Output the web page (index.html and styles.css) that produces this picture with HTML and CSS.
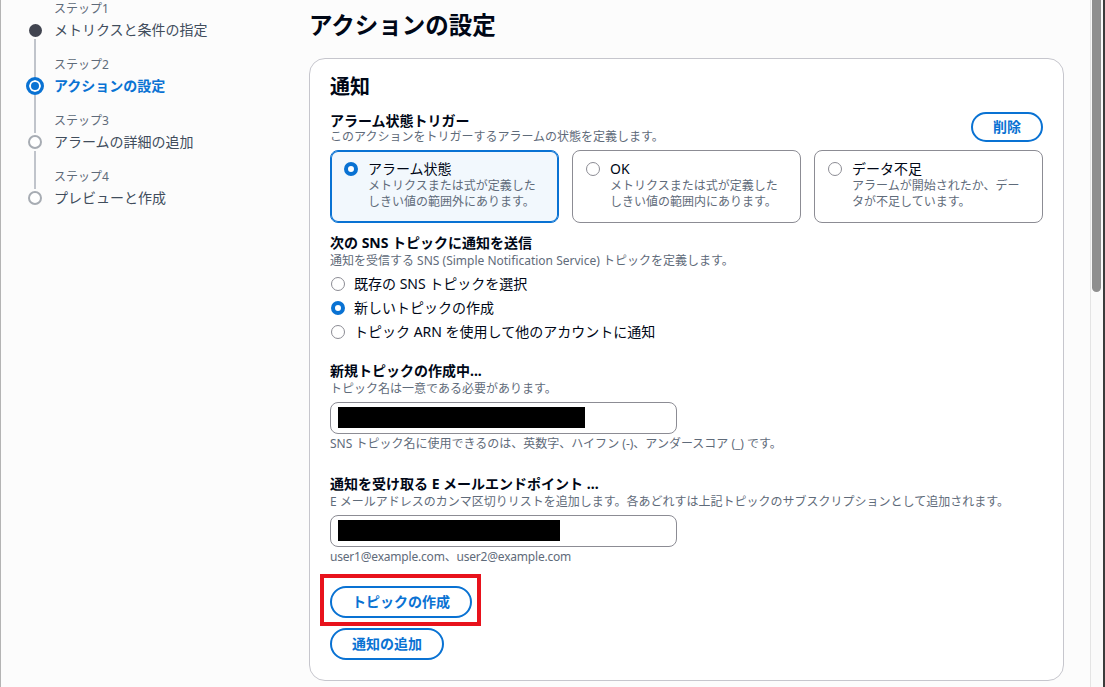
FILE: index.html
```html
<!DOCTYPE html>
<html lang="ja">
<head>
  <meta charset="UTF-8" />
  <meta name="viewport" content="width=device-width, initial-scale=1.0" />
  <title>アクションの設定</title>
  <link rel="stylesheet" href="styles.css">
</head>
<body>
  <div class="frame">
    <div class="page">
      <nav class="sidebar">
        <ol class="steps">
          <li class="step done">
            <div class="rail"><span class="seg top"></span><span class="dot-box"><span class="dot"></span></span><span class="seg bottom"></span></div>
            <div class="step-text">
              <div class="step-num">ステップ1</div>
              <div class="step-title">メトリクスと条件の指定</div>
            </div>
          </li>
          <li class="step active">
            <div class="rail"><span class="seg top"></span><span class="dot-box"><span class="dot"></span></span><span class="seg bottom"></span></div>
            <div class="step-text">
              <div class="step-num">ステップ2</div>
              <div class="step-title">アクションの設定</div>
            </div>
          </li>
          <li class="step">
            <div class="rail"><span class="seg top"></span><span class="dot-box"><span class="dot"></span></span><span class="seg bottom"></span></div>
            <div class="step-text">
              <div class="step-num">ステップ3</div>
              <div class="step-title">アラームの詳細の追加</div>
            </div>
          </li>
          <li class="step">
            <div class="rail"><span class="seg top"></span><span class="dot-box"><span class="dot"></span></span><span class="seg bottom"></span></div>
            <div class="step-text">
              <div class="step-num">ステップ4</div>
              <div class="step-title">プレビューと作成</div>
            </div>
          </li>
        </ol>
      </nav>

      <main class="content">
        <h1>アクションの設定</h1>

        <section class="card">
          <h2>通知</h2>

          <div class="trigger-head">
            <div>
              <div class="field-label">アラーム状態トリガー</div>
              <div class="field-desc tight">このアクションをトリガーするアラームの状態を定義します。</div>
            </div>
            <button class="btn btn-delete">削除</button>
          </div>

          <div class="tiles">
            <div class="tile selected">
              <span class="radio checked"></span>
              <div>
                <div class="tile-label">アラーム状態</div>
                <div class="tile-desc">メトリクスまたは式が定義した<br>しきい値の範囲外にあります。</div>
              </div>
            </div>
            <div class="tile">
              <span class="radio"></span>
              <div>
                <div class="tile-label">OK</div>
                <div class="tile-desc">メトリクスまたは式が定義した<br>しきい値の範囲内にあります。</div>
              </div>
            </div>
            <div class="tile">
              <span class="radio"></span>
              <div>
                <div class="tile-label">データ不足</div>
                <div class="tile-desc">アラームが開始されたか、デー<br>タが不足しています。</div>
              </div>
            </div>
          </div>

          <div class="field-label sns-label">次の SNS トピックに通知を送信</div>
          <div class="field-desc">通知を受信する SNS (Simple Notification Service) トピックを定義します。</div>
          <div class="radio-list">
            <div class="radio-item"><span class="radio"></span>既存の SNS トピックを選択</div>
            <div class="radio-item"><span class="radio checked"></span>新しいトピックの作成</div>
            <div class="radio-item"><span class="radio"></span>トピック ARN を使用して他のアカウントに通知</div>
          </div>

          <div class="field-label topic-label">新規トピックの作成中...</div>
          <div class="field-desc">トピック名は一意である必要があります。</div>
          <div class="text-input"><span class="redact redact-name"></span></div>
          <div class="field-hint">SNS トピック名に使用できるのは、英数字、ハイフン (-)、アンダースコア (_) です。</div>

          <div class="field-label email-label">通知を受け取る E メールエンドポイント ...</div>
          <div class="field-desc">E メールアドレスのカンマ区切りリストを追加します。各あどれすは上記トピックのサブスクリプションとして追加されます。</div>
          <div class="text-input"><span class="redact redact-email"></span></div>
          <div class="field-hint email-hint">user1@example.com、user2@example.com</div>

          <div class="actions">
            <span class="highlight"><button class="btn">トピックの作成</button></span>
            <button class="btn">通知の追加</button>
          </div>
        </section>
      </main>
    </div>

    <div class="scrollbar"><div class="thumb"></div></div>
  </div>
</body>
</html>
```

FILE: styles.css
```css
body {
  margin: 0;
  font-family: "Noto Sans", "Noto Sans CJK JP", sans-serif;
  color: #000716;
  background: #fff;
}
.frame {
  display: flex;
  height: 687px;
  overflow: hidden;
}
.page {
  flex: 1;
  display: flex;
  border-left: 1px solid #b4b4b4;
  background: #fcfcfc;
}

/* stepper */
.sidebar {
  flex: none;
  width: 284px;
  padding: 1px 0 0 24px;
}
.steps {
  list-style: none;
  margin: 0;
  padding: 0;
}
.step {
  display: flex;
  gap: 9px;
}
.rail {
  width: 20px;
  display: flex;
  flex-direction: column;
  align-items: center;
}
.seg {
  width: 2px;
  background: #c0c4cb;
}
.seg.top {
  height: 20px;
}
.seg.bottom {
  flex: 1;
}
.step:first-child .seg.top,
.step:last-child .seg.bottom {
  visibility: hidden;
}
.dot-box {
  width: 18px;
  height: 18px;
  display: flex;
  align-items: center;
  justify-content: center;
}
.dot {
  width: 10px;
  height: 10px;
  border: 2px solid #a7acb3;
  border-radius: 50%;
  background: #fff;
}
.step.done .dot {
  width: 13px;
  height: 13px;
  border: none;
  background: #414450;
}
.step.active .dot {
  width: 12px;
  height: 12px;
  border: 3px solid #0972d3;
  background: #0972d3;
  box-shadow: inset 0 0 0 2px #fff;
}
.step-text {
  padding-bottom: 16px;
}
.step-num {
  font-size: 12px;
  line-height: 16px;
  color: #5f6b7a;
}
.step-title {
  margin-top: 2px;
  font-size: 14px;
  line-height: 22px;
  color: #414d5c;
}
.step.active .step-title {
  color: #0972d3;
  font-weight: 700;
}

/* main */
.content {
  flex: none;
  width: 755px;
  padding-top: 9px;
}
h1 {
  margin: 0 0 17px;
  font-size: 23.5px;
  line-height: 32px;
  font-weight: 700;
}
.card {
  background: #fff;
  border: 1px solid #c6c6cd;
  border-radius: 16px;
  padding: 14px 20px 20px;
}
h2 {
  margin: 0;
  font-size: 20px;
  line-height: 28px;
  font-weight: 700;
}
.field-label {
  font-size: 14px;
  line-height: 20px;
  font-weight: 700;
}
.field-desc {
  font-size: 12px;
  line-height: 16px;
  color: #5f6b7a;
}
.field-desc.tight {
  margin-top: -2px;
}
.field-hint {
  margin-top: 2px;
  font-size: 12px;
  line-height: 16px;
  color: #5f6b7a;
}
.email-hint {
  letter-spacing: -0.2px;
}
.trigger-head {
  display: flex;
  justify-content: space-between;
  align-items: flex-start;
  margin-top: 10px;
}
.btn {
  font-family: inherit;
  font-size: 14px;
  font-weight: 700;
  color: #0972d3;
  background: #fff;
  border: 2px solid #0972d3;
  border-radius: 20px;
  height: 32px;
  padding: 0 20px;
  line-height: 1;
  cursor: pointer;
}
.btn-delete {
  height: 30px;
  margin-top: 1px;
}

/* tiles */
.tiles {
  display: grid;
  grid-template-columns: repeat(3, 1fr);
  gap: 13px;
  margin-top: 5px;
}
.tile {
  display: flex;
  gap: 10px;
  border: 1px solid #8c8c94;
  border-radius: 8px;
  padding: 9px 13px 12px;
  height: 73px;
  box-sizing: border-box;
}
.tile.selected {
  border-color: #0972d3;
  box-shadow: inset 0 0 0 1px #0972d3;
  background: #f2f8fd;
}
.tile-label {
  font-size: 14px;
  line-height: 18px;
}
.tile-desc {
  font-size: 12px;
  line-height: 16px;
  color: #5f6b7a;
}
.radio {
  flex: none;
  width: 14px;
  height: 14px;
  box-sizing: border-box;
  border: 1.5px solid #8c8c94;
  border-radius: 50%;
  background: #fff;
  margin-top: 2px;
}
.radio.checked {
  border: 4px solid #0972d3;
}

/* sns */
.sns-label {
  margin-top: 10px;
}
.radio-list {
  margin-top: 5px;
  display: flex;
  flex-direction: column;
  gap: 4px;
}
.radio-item {
  display: flex;
  align-items: center;
  gap: 9px;
  font-size: 14px;
  line-height: 20px;
  padding-left: 1px;
}
.radio-item .radio {
  margin-top: 0;
}
.topic-label {
  margin-top: 19px;
}
.email-label {
  margin-top: 22px;
}
.text-input {
  margin-top: 5px;
  width: 347px;
  height: 32px;
  box-sizing: border-box;
  border: 1px solid #8c8c94;
  border-radius: 8px;
  padding: 4px 7px;
  background: #fff;
}
.redact {
  display: block;
  height: 21px;
  background: #000;
}
.redact-name {
  width: 247px;
}
.redact-email {
  width: 222px;
}

/* buttons */
.actions {
  margin-top: 21px;
  display: flex;
  flex-direction: column;
  align-items: flex-start;
  gap: 10px;
}
.highlight {
  position: relative;
  display: inline-block;
}
.highlight .btn {
  display: block;
}
.highlight::after {
  content: "";
  position: absolute;
  left: -10px;
  right: -9px;
  top: -12px;
  bottom: -8px;
  border: 4px solid #e8121c;
}

/* fake scrollbar */
.scrollbar {
  flex: none;
  width: 11px;
  padding-left: 1px;
  border-left: 1px solid #e4e4e4;
  border-right: 2px solid #3c3c3c;
  background: #fafafa;
}
.thumb {
  width: 9px;
  height: 292px;
  background: #8f8f8f;
  border-radius: 0 0 5px 5px;
}
```
